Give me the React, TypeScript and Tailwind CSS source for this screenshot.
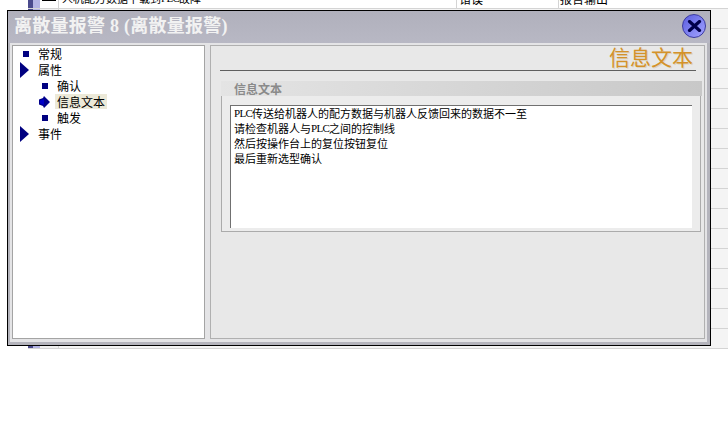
import React from 'react';

const cjk = "font-['Noto_Sans_CJK_SC','Liberation_Sans',sans-serif]";

const Square = () => (
  <span className="w-[6px] h-[6px] bg-[#000080] shrink-0" />
);

const BigArrow = () => (
  <svg width="9" height="16" viewBox="0 0 9 16" className="shrink-0 -ml-[2px]">
    <path d="M0 0 L9 8 L0 16 Z" fill="#000080" />
  </svg>
);

const ActiveArrow = () => (
  <svg width="11" height="12" viewBox="0 0 11 12" className="shrink-0">
    <path d="M0 3.5 L4 2 L5 0 L11 6 L5 12 L4 10 L0 8.5 Z" fill="#00008c" />
    <path d="M1 4.5 L5 3 L5 9 L1 7.5 Z" fill="#0000c8" />
  </svg>
);

const TreeRow = ({ label, icon, child, active }: { label: string; icon: React.ReactNode; child?: boolean; active?: boolean }) => (
  <div className={`h-4 flex items-center ${child ? 'pl-[26px]' : 'pl-[7px]'}`}>
    <span className="w-[11px] flex justify-center shrink-0">{icon}</span>
    <span className={`ml-[5px] mb-[2px] px-[2px] h-[15px] leading-[15px] text-[12px] text-black ${active ? 'bg-[#ece9d8]' : ''}`}>{label}</span>
  </div>
);

const Latin = ({ children }: { children: React.ReactNode }) => (
  <span className="font-['Liberation_Serif',serif] text-[11px] tracking-[-0.7px]">{children}</span>
);

const TextLine = ({ children }: { children: React.ReactNode }) => (
  <div className="h-[15px] flex items-center whitespace-nowrap">{children}</div>
);

const BackgroundRows = () => {
  const rows = Array.from({ length: 18 });
  return (
    <div className="ml-[28px] w-[700px] -mt-[11px] flex flex-col">
      {rows.map((_, i) => (
        <div key={i} className="h-5 flex border-b border-[#d4d4d4] bg-[#f4f4f4]">
          <div className="w-[5px] bg-[#4a4a8c]" />
          <div className="w-[7px] bg-[#b4b4e4]" />
          <div className={`w-[19px] border-r border-[#d4d4d4] flex items-center justify-center ${i === 0 ? 'bg-white' : 'bg-[#f0f0f0]'}`}>
            {i === 0 && (
              <div className="w-[14px] flex flex-col gap-[1px]">
                <div className="h-[1px] bg-black" />
                <div className="h-[1px] bg-black" />
                <div className="h-[1px] bg-black" />
              </div>
            )}
          </div>
          {i === 0 ? (
            <div className="flex-1 flex items-center bg-white text-[12px] text-black leading-none">
              <span className="pl-[3px] w-[398px] h-full flex items-center border-r border-[#d4d4d4] text-[11px]">人机配方数据下载到<Latin>PLC</Latin>故障</span>
              <span className="pl-[2px] w-[102px] h-full flex items-center border-r border-[#d4d4d4]">错误</span>
              <span className="pl-[1px]">报告输出</span>
            </div>
          ) : (
            <div className="flex-1" />
          )}
        </div>
      ))}
    </div>
  );
};

export default function App() {
  return (
    <div className={`relative w-[728px] h-[439px] overflow-hidden bg-white ${cjk}`}>
      <BackgroundRows />

      {/* dialog */}
      <div className="absolute left-[7px] top-[10px] w-[704px] h-[336px] flex flex-col border border-black">
        <div className="h-[32px] shrink-0 flex items-center justify-between pl-[6px] pr-[4px] pb-[3px] bg-gradient-to-b from-[#b0b0bc] to-[#b8b8c4]">
          <span className="text-[18px] font-bold tracking-[0.25px] text-[#f2f2f2] leading-none font-['Liberation_Serif','Noto_Sans_CJK_SC',serif]">
            离散量报警 8 (离散量报警)
          </span>
          <div className="w-[24px] h-[24px] rounded-full bg-gradient-to-br from-[#5c5ce0] to-[#a4a4ff] border border-[#3a3aa0] flex items-center justify-center">
            <svg width="15" height="12" viewBox="0 0 15 12">
              <path d="M2.5 1.5 L12.5 10.5 M12.5 1.5 L2.5 10.5" stroke="#00004c" strokeWidth="3.2" strokeLinecap="round" />
            </svg>
          </div>
        </div>

        <div className="flex-1 min-h-0 flex bg-[#e4e4e6] border-l-2 border-r-[3px] border-b-[3px] border-[#b4b4bc] pl-[2px] pt-[2px] pr-[2px] pb-[3px]">
          <div className="w-[193px] bg-white border border-[#a4a4a4] shrink-0">
            <TreeRow label="常规" icon={<Square />} />
            <TreeRow label="属性" icon={<BigArrow />} />
            <TreeRow label="确认" icon={<Square />} child />
            <TreeRow label="信息文本" icon={<ActiveArrow />} child active />
            <TreeRow label="触发" icon={<Square />} child />
            <TreeRow label="事件" icon={<BigArrow />} />
          </div>

          <div className="flex-1 ml-[5px] bg-[#e8e8e8] border border-[#b0b0b0] flex flex-col">
            <div className="ml-[9px] mr-[8px] h-[25px] shrink-0 border-b border-[#606060] flex justify-end items-center pr-[3px] pb-[3px]">
              <span className="text-[21px] leading-none text-[#d4922a] [text-shadow:1px_1px_0_#dcd4c0]">信息文本</span>
            </div>

            <div className="mt-[10px] ml-[10px] mr-[2px] h-[15px] shrink-0 bg-gradient-to-r from-[#e4e4e4] to-[#c8c8c8] flex items-center pl-[13px]">
              <span className="text-[12px] font-bold text-[#8a8a8a] leading-none">信息文本</span>
            </div>

            <div className="ml-[10px] mr-[3px] h-[136px] shrink-0 border-l border-b border-r border-[#ababab] pl-[8px] pr-[8px] pt-[9px] pb-[3px] bg-[#ececec]">
              <div className="h-full bg-white border-t border-l border-[#707070] pl-[3px] text-[11px] text-black">
                <TextLine><Latin>PLC</Latin>传送给机器人的配方数据与机器人反馈回来的数据不一至</TextLine>
                <TextLine>请检查机器人与<Latin>PLC</Latin>之间的控制线</TextLine>
                <TextLine>然后按操作台上的复位按钮复位</TextLine>
                <TextLine>最后重新选型确认</TextLine>
              </div>
            </div>
          </div>
        </div>
      </div>
    </div>
  );
}
